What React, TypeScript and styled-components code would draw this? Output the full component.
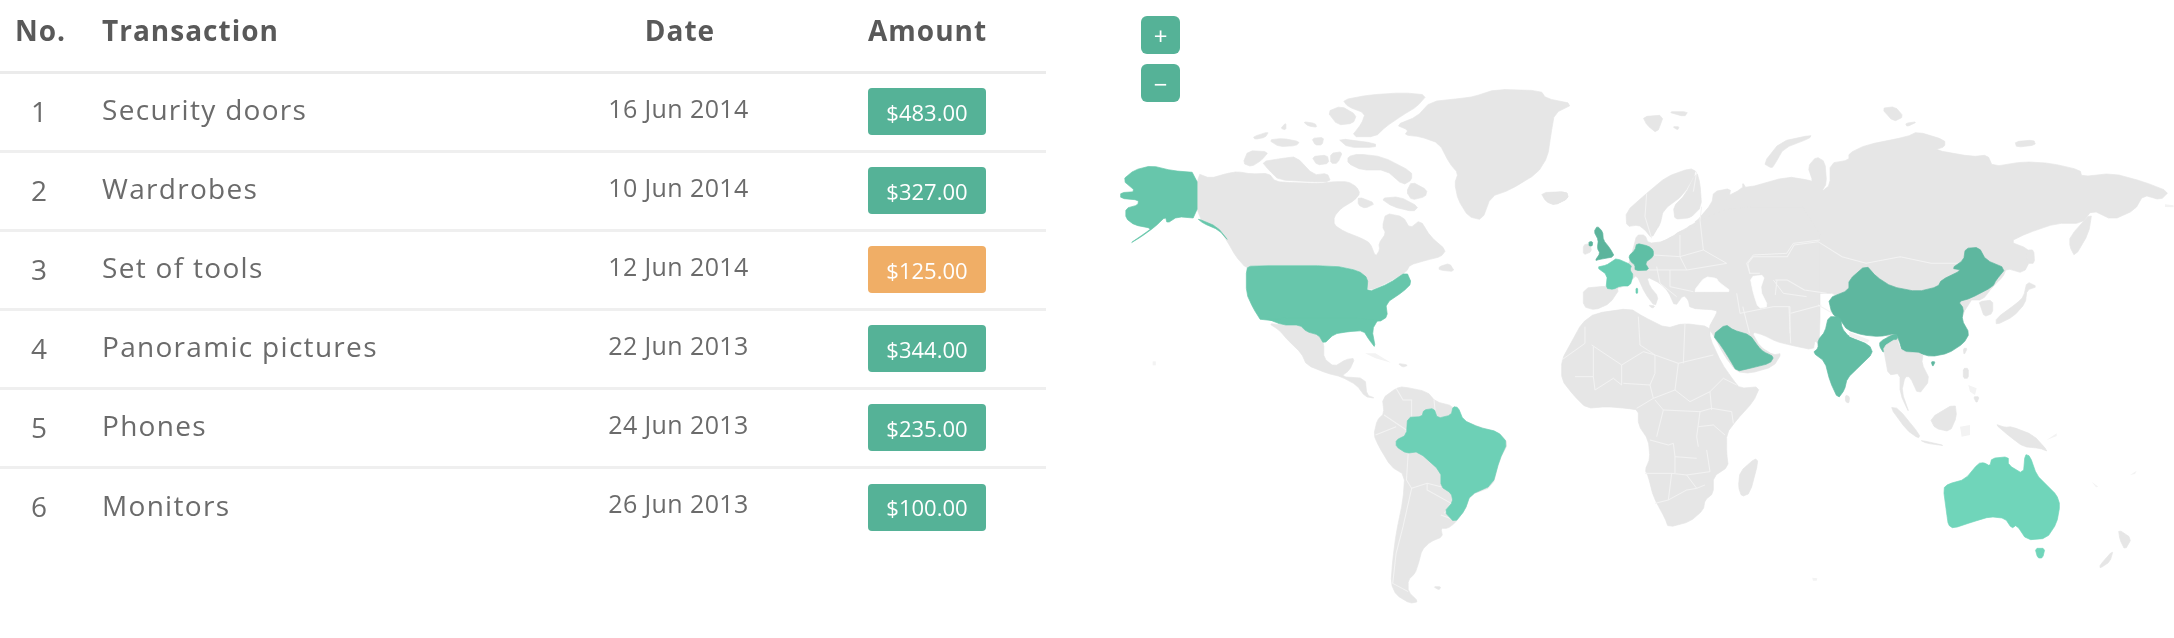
import React from 'react';
import styled, { createGlobalStyle } from 'styled-components';

const Global = createGlobalStyle`
  html, body { margin: 0; padding: 0; background: #fff; }
  body { font-family: "Open Sans", "Noto Sans", sans-serif; overflow: hidden; }
`;

const Page = styled.div`
  display: flex;
  width: 2174px;
  height: 638px;
  filter: blur(0.6px);
`;

const TablePanel = styled.div`
  width: 1046px;
  flex: none;
`;

const Table = styled.table`
  width: 100%;
  border-collapse: collapse;
  table-layout: fixed;
`;

const HeadRow = styled.tr`
  height: 72px;
  border-bottom: 3px solid #ebebeb;
`;

const HeadCell = styled.th<{ $align?: string; $pad?: number; $w: number }>`
  width: ${p => p.$w}px;
  box-sizing: border-box;
  padding: 0 0 10px ${p => p.$pad ?? 0}px;
  text-align: ${p => p.$align ?? 'left'};
  font-size: 28px;
  letter-spacing: 1px;
  font-weight: 700;
  color: #595959;
`;

const Row = styled.tr`
  height: 79px;
  border-bottom: 3px solid #efefef;
  &:last-child { border-bottom: none; }
`;

const NoCell = styled.td`
  text-align: center;
  font-size: 28px;
  color: #6b6b6b;
  padding-bottom: 3px;
`;

const NameCell = styled.td`
  padding: 0 0 5px 24px;
  font-size: 28px;
  letter-spacing: 1.3px;
  color: #6b6b6b;
`;

const DateCell = styled.td`
  text-align: center;
  font-size: 25px;
  letter-spacing: 0.4px;
  color: #6b6b6b;
  padding: 0 3px 8px 0;
`;

const AmountCell = styled.td`
  padding-left: 48px;
`;

const Label = styled.span<{ $warn?: boolean }>`
  display: flex;
  align-items: center;
  justify-content: center;
  width: 118px;
  height: 47px;
  border-radius: 4px;
  background: ${p => (p.$warn ? '#f0ae66' : '#55b297')};
  color: #fff;
  font-size: 22px;
`;

const MapPanel = styled.div`
  position: relative;
  flex: 1;
  height: 638px;
`;

const MapSvg = styled.svg`
  display: block;
  width: 1128px;
  height: 638px;
`;

const ZoomControls = styled.div`
  position: absolute;
  left: 95px;
  top: 16px;
  display: flex;
  flex-direction: column;
  gap: 10px;
`;

const ZoomButton = styled.div`
  width: 39px;
  height: 38px;
  border-radius: 6px;
  background: #55b297;
  color: #fff;
  font-size: 24px;
  line-height: 40px;
  text-align: center;
`;

const LandShape = styled.polygon`
  fill: #e6e6e6;
  stroke: #e6e6e6;
  stroke-width: 2;
  stroke-linejoin: round;
`;
const Faint = styled.polygon`
  fill: #f3f3f3;
`;
const SeaShape = styled.polygon`
  fill: #fff;
  stroke: #fff;
  stroke-width: 2;
  stroke-linejoin: round;
`;
const Border = styled.polyline`
  fill: none;
  stroke: #f3f3f3;
  stroke-width: 3;
`;
const CountryShape = styled.polygon<{ $c: string }>`
  fill: ${p => p.$c};
  stroke: ${p => p.$c};
  stroke-width: 2;
  stroke-linejoin: round;
`;

/* One pass of corner cutting, so hand-traced coastlines read as soft curves. */
const smooth = (points: string) => {
  const pts = points.trim().split(/\s+/).map(p => p.split(',').map(Number));
  const out: string[] = [];
  pts.forEach((a, i) => {
    const b = pts[(i + 1) % pts.length];
    const t = 0.2;
    out.push(`${a[0] + (b[0] - a[0]) * t},${a[1] + (b[1] - a[1]) * t}`);
    out.push(`${a[0] + (b[0] - a[0]) * (1 - t)},${a[1] + (b[1] - a[1]) * (1 - t)}`);
  });
  return out.join(' ');
};

const Land = ({ points }: { points: string }) => <LandShape points={smooth(points)} />;
const Sea = ({ points }: { points: string }) => <SeaShape points={smooth(points)} />;
const Country = ({ points, $c }: { points: string; $c: string }) => (
  <CountryShape $c={$c} points={smooth(points)} />
);

const rows = [
  ['1', 'Security doors', '16 Jun 2014', '$483.00'],
  ['2', 'Wardrobes', '10 Jun 2014', '$327.00'],
  ['3', 'Set of tools', '12 Jun 2014', '$125.00'],
  ['4', 'Panoramic pictures', '22 Jun 2013', '$344.00'],
  ['5', 'Phones', '24 Jun 2013', '$235.00'],
  ['6', 'Monitors', '26 Jun 2013', '$100.00'],
];

const northLand = [
  '282,520 320,535 370,520 400,515 440,522 490,520 510,545 560,548 640,550 680,545 720,545 745,560 755,580 740,600 700,625 680,650 680,675 710,695 760,715 785,730 800,770 812,750 810,730 830,700 820,680 830,640 880,650 900,685 930,660 960,710 1005,750 990,770 950,780 900,795 890,815 850,840 780,875 775,835 750,810 680,795 440,795 425,805 395,770 370,725 345,685 282,655',
  '415,490 430,452 490,455 470,480 440,500',
  '470,485 530,475 570,470 620,525 660,520 670,545 610,545 520,540 490,510',
  '445,410 490,395 480,412 450,418',
  '490,420 530,415 580,425 570,437 520,440',
  '615,415 650,412 645,435 625,435',
  '590,365 625,370 630,382 605,378',
  '525,385 540,368 540,390',
  '615,470 660,465 665,490 630,495',
  '670,460 705,455 690,490 670,490',
  '690,415 800,430 800,442 720,442',
  '720,470 750,462 820,470 905,515 905,540 880,555 830,510 760,510 720,490',
  '660,335 700,318 745,345 735,370 690,375',
  '705,300 780,285 880,278 950,285 920,320 880,345 830,380 800,410 730,410 760,370 770,340 720,320',
  '905,545 950,570 945,590 905,600 890,575',
  '750,590 800,610 770,625 750,615',
  '815,595 870,590 925,620 910,635 850,620',
  '860,375 920,350 960,305 1050,295 1085,290 1150,268 1280,272 1295,295 1375,312 1320,340 1310,400 1300,470 1270,520 1190,570 1135,590 1110,660 1070,650 1040,600 1030,550 1040,520 1015,490 985,430 930,410 885,405 895,390',
  '1280,578 1355,575 1360,595 1320,615 1295,605',
  '985,800 1015,790 1030,815 985,810',
];

const southAmericaBorders = [
  '860,205 880,240 905,240 905,290',
  '825,285 890,330 890,345',
  '970,240 975,290',
  '800,345 860,320',
  '895,400 890,480 905,505 880,620 860,700 850,790 895,815',
  '905,505 950,490 990,500',
  '950,490 950,510 1020,550 1000,580',
  '990,585 1030,600',
];

const africa = '125,-20 165,-50 270,-65 310,-40 380,-5 430,-20 510,-10 510,25 545,100 580,150 600,175 660,170 640,215 590,270 560,310 560,370 565,410 520,440 520,490 495,510 490,540 450,575 385,592 375,565 340,500 325,440 315,420 330,385 325,330 295,285 295,240 260,235 200,230 140,235 100,195 65,150 65,90 95,35';

const africaBorders = [
  '155,45 245,105 245,165',
  '160,50 160,140',
  '105,140 160,140 165,180 220,145 245,165',
  '65,90 135,40 135,-10',
  '245,105 310,65 345,75 415,100 520,75',
  '295,-40 300,45 345,75 345,130 330,165 340,205 290,235',
  '435,-20 430,100',
  '415,100 405,180 340,205',
  '405,180 450,215 510,185 515,240',
  '250,160 330,165',
  '345,210 370,240 480,245 515,235 575,245',
  '370,240 350,320',
  '480,245 470,320 475,350',
  '475,290 520,285 555,315',
  '330,330 385,345 400,340 405,380 470,385',
  '575,245 580,280',
  '315,430 395,430 440,435',
  '395,430 385,510 345,520',
  '405,380 405,430',
  '440,435 470,475 495,465',
  '500,360 510,425 440,435',
  '385,510 440,480 470,475',
  '510,185 550,145 590,165',
];

const eurasia = '160,490 210,430 215,395 265,385 260,415 225,425 300,385 300,368 310,385 430,350 490,360 505,365 490,320 515,290 540,305 545,370 530,395 555,375 555,310 610,300 610,280 660,255 780,230 810,215 890,240 890,260 860,270 970,290 1015,285 1030,320 1120,305 1200,310 1285,330 1290,350 1380,340 1470,365 1545,395 1520,420 1470,405 1445,450 1380,480 1320,450 1290,490 1215,490 1130,520 1080,545 1130,565 1145,590 1120,640 1070,625 1060,650 1030,680 1000,720 960,720 900,880 700,830 600,700 400,700 150,700 40,560';

const europeMain = '320,330 340,265 350,225 375,225 385,250 430,245 475,215 520,205 540,180 640,140 900,140 900,560 885,540 880,570 810,555 770,545 730,525 695,515 720,560 760,585 785,580 760,620 690,640 650,635 615,590 580,525 565,505 590,460 590,450 510,445 505,420 490,405 465,440 445,395 420,370 380,350 390,380 415,410 405,440 375,400 350,345 335,360 300,385 260,385';

const asiaBorders = [
  '315,610 330,590 430,590 450,555 520,545 590,590 660,610 760,590 850,610 930,610',
  '315,610 320,640 350,640',
  '395,660 430,660 480,690 545,700',
  '400,660 395,705',
  '435,740 440,850',
  '300,740 320,820',
  '440,760 530,735',
  '520,735 580,770',
];

const europeBorders = [
  '380,100 375,170 395,235',
  '530,35 520,95',
  '545,140 540,180 550,270 620,310',
  '480,225 480,290 550,270',
  '400,285 480,290 500,330 620,310',
  '385,330 450,330 500,330',
  '410,320 420,370 470,410',
  '450,330 450,380 520,395',
  '680,310 700,285 800,280 820,250 900,240',
  '680,310 690,340',
  '760,360 790,400 860,410',
  '650,400 660,460 760,440 810,440 810,520',
];

export default function App() {
  return (
    <Page>
      <Global />
      <TablePanel>
        <Table>
          <thead>
            <HeadRow>
              <HeadCell $w={78} $align="center" $pad={3}>No.</HeadCell>
              <HeadCell $w={462} $pad={24}>Transaction</HeadCell>
              <HeadCell $w={280} $align="center">Date</HeadCell>
              <HeadCell $w={226} $pad={48}>Amount</HeadCell>
            </HeadRow>
          </thead>
          <tbody>
            {rows.map(r => (
              <Row key={r[0]}>
                <NoCell>{r[0]}</NoCell>
                <NameCell>{r[1]}</NameCell>
                <DateCell>{r[2]}</DateCell>
                <AmountCell>
                  <Label $warn={r[0] === '3'}>{r[3]}</Label>
                </AmountCell>
              </Row>
            ))}
          </tbody>
        </Table>
      </TablePanel>
      <MapPanel>
        <MapSvg viewBox="1046 0 1128 638">
          {/* North America */}
          <g transform="translate(1100,0) scale(0.34435,0.33333)">
            {northLand.map(p => <Land key={p} points={p} />)}
            <Country $c="#67c6ab" points="282,518 282,655 225,650 195,670 190,650 160,680 120,710 85,732 130,700 150,685 100,675 75,655 75,625 110,615 112,600 60,595 60,578 105,575 65,540 100,510 150,497 210,512" />
            <Country $c="#67c6ab" points="282,655 340,680 375,725 345,690 300,670" />
            <Country $c="#67c6ab" points="440,797 680,797 750,812 778,835 775,878 840,850 890,815 905,850 880,875 830,910 835,950 810,966 470,966 445,925 425,880 425,805" />
          </g>
          {/* Latin America */}
          <g transform="translate(1100,320) scale(0.34435,0.33333)">
            <Land points="490,10 530,15 580,15 600,35 635,45 650,70 650,115 680,140 715,118 740,115 725,150 700,170 770,175 775,225 800,235 770,230 745,195 700,170 660,160 600,135 585,100 545,60 520,30" />
            <Land points="865,130 895,135 880,142" />
            <Faint points="770,100 800,100 845,128 800,115" />
            <Land points="820,235 860,205 880,200 950,215 975,245 1025,258 1050,300 1100,320 1160,340 1185,370 1160,420 1140,500 1075,525 1060,570 1030,610 1010,625 990,625 995,650 960,665 935,690 925,730 915,760 895,780 895,815 925,845 900,850 860,825 845,790 850,720 860,640 880,540 885,465 845,440 810,380 795,345 805,300 825,280" />
            {southAmericaBorders.map(p => <Border key={p} points={p} />)}
            <Country $c="#6dd0b6" points="893,292 935,290 940,270 970,265 980,295 1020,285 1025,260 1040,262 1055,300 1100,322 1155,335 1183,368 1160,420 1140,495 1075,525 1060,570 1030,608 1000,575 1025,545 1020,520 990,500 990,455 925,395 890,400 860,380 860,360 890,345" />
            <Country $c="#67c6ab" points="480,-6 810,-6 790,30 800,84 782,60 765,32 720,35 680,42 650,72 635,45 600,35 580,15 530,15" />
            <Land points="968,800 990,800 985,810" />
            <Faint points="153,124 162,124 162,136 153,136" />
          </g>
          {/* Eurasia */}
          <g transform="translate(1640,60) scale(0.34247,0.33333)">
            <Land points={eurasia} />
          </g>
          {/* Europe and Middle East */}
          <g transform="translate(1520,160) scale(0.33333)">
            <Land points={europeMain} />
            <Land points="320,200 318,155 380,100 440,50 510,25 530,35 490,105 430,150 420,195 395,235 375,210 355,195" />
            <Land points="530,35 540,70 545,140 510,175 465,180 460,140 495,105" />
            <Land points="190,385 260,378 300,385 270,430 225,450 190,440" />
            <Land points="70,100 140,95 145,115 105,135 80,125" />
            <Land points="190,255 210,250 215,275 190,285" />
            <Land points="385,435 405,438 398,445" />
            <Sea points="420,195 460,180 520,175 525,190 480,200 470,220 430,240 395,240" />
            <Sea points="520,395 555,350 590,355 595,365 635,395 590,395 545,395" />
            <Sea points="690,350 735,345 720,390 745,440 715,445 700,400" />
            {europeBorders.map(p => <Border key={p} points={p} />)}
            <Country $c="#5cb49c" points="222,215 232,198 248,215 250,240 270,265 284,290 240,298 225,302 240,280 232,265 235,240" />
            <Country $c="#5cb49c" points="207,245 218,245 217,258 207,258" />
            <Country $c="#68cdb2" points="230,322 260,315 275,305 290,295 335,315 330,330 340,345 330,378 300,378 280,388 258,385 262,345" />
            <Country $c="#5fbfa5" points="326,288 345,270 350,250 385,258 400,270 400,290 375,308 388,330 345,332 345,315 332,305" />
            <Country $c="#68cdb2" points="348,385 353,385 353,400 348,400" />
            <Country $c="#62bda4" points="578,525 617,493 640,510 690,525 715,560 730,575 762,590 750,610 690,625 650,634 630,600 605,560" />
          </g>
          {/* Africa */}
          <g transform="translate(1540,330) scale(0.33333)">
            <Land points={africa} />
            <Land points="600,425 645,385 655,395 630,490 605,500 595,470" />
            {africaBorders.map(p => <Border key={p} points={p} />)}
          </g>
          {/* Asia foreground */}
          <g transform="translate(1640,60) scale(0.34247,0.33333)">
            {asiaBorders.map(p => <Border key={p} points={p} />)}
            <Land points="8,170 70,165 50,220 20,195" />
            <Land points="80,155 140,155 130,170" />
            <Land points="95,200 115,200 110,210" />
            <Land points="360,310 410,245 500,225 495,235 420,265 395,310 385,325" />
            <Land points="705,145 745,140 770,170 740,185" />
            <Land points="775,190 810,185 780,200" />
            <Land points="1095,245 1150,240 1155,255 1100,262" />
            <Land points="1255,530 1320,455 1310,520 1270,590 1255,560" />
            <Land points="990,725 1030,720 1030,760 1005,770 995,740" />
            <Land points="1130,665 1160,680 1130,690 1125,730 1090,770 1040,795 1040,775 1100,730 1120,710" />
            <Land points="1130,570 1150,570 1152,610 1132,610" />
            <Country $c="#5eb79f" points="550,715 610,690 610,660 660,615 690,650 735,680 810,695 870,680 880,660 940,630 910,625 945,600 950,565 990,562 1010,600 1068,625 1040,660 1030,680 965,715 930,725 945,745 940,780 962,820 945,850 900,880 850,890 810,878 770,890 755,835 745,820 700,830 650,825 605,810 585,780 560,760" />
            <Country $c="#5eb79f" points="850,905 862,905 855,920" />
            <Country $c="#62bda4" points="550,770 585,770 590,805 610,830 670,855 680,880 640,920 605,955 597,990 578,1016 555,965 540,905 505,878 520,865 520,840 540,815" />
            <Country $c="#62bda4" points="700,845 745,820 755,835 725,850 712,880 700,860" />
            <Faint points="610,815 670,840 665,848 612,830" />
            <Faint points="1533,433 1558,436 1558,442 1533,441" />
          </g>
          {/* Oceania */}
          <g transform="translate(1860,320) scale(0.33333)">
            <Land points="70,80 110,55 125,95 190,100 185,130 210,180 175,225 150,170 135,170 125,215 150,285 120,220 120,160 85,165 75,110" />
            <Land points="90,262 115,265 180,345 175,355 140,330" />
            <Land points="180,360 260,378 200,370" />
            <Land points="210,295 285,250 290,290 270,335 225,325" />
            <Faint points="300,320 330,315 330,345 305,350" />
            <Land points="310,145 325,145 325,175 310,175" />
            <Land points="340,230 358,230 350,250" />
            <Faint points="325,195 350,205 345,225 330,215" />
            <Land points="310,85 322,85 312,105" />
            <Land points="405,312 435,322 455,320 520,345 565,395 540,385 490,380 450,350" />
            <Land points="775,628 815,655 795,690 780,660" />
            <Land points="760,690 750,725 720,745 720,735" />
            <Faint points="560,360 590,340 590,348" />
            <Faint points="695,485 715,500 708,502" />
            <Faint points="810,465 830,452 825,462" />
            <Country $c="#70d5ba" points="250,505 265,492 315,478 355,430 372,428 390,438 395,415 445,410 445,435 490,462 495,403 510,408 530,465 560,495 590,525 600,555 590,610 560,655 500,660 470,615 455,625 435,595 390,590 340,605 280,625 265,615 260,580" />
            <Country $c="#70d5ba" points="525,685 555,685 548,714 533,714" />
          </g>
          <g transform="translate(1640,320) scale(0.34247,0.33333)">
            <Land points="600,225 612,230 610,250 600,245" />
            <Faint points="503,773 518,775 516,782 505,782" />
          </g>
        </MapSvg>
        <ZoomControls>
          <ZoomButton>+</ZoomButton>
          <ZoomButton>−</ZoomButton>
        </ZoomControls>
      </MapPanel>
    </Page>
  );
}
